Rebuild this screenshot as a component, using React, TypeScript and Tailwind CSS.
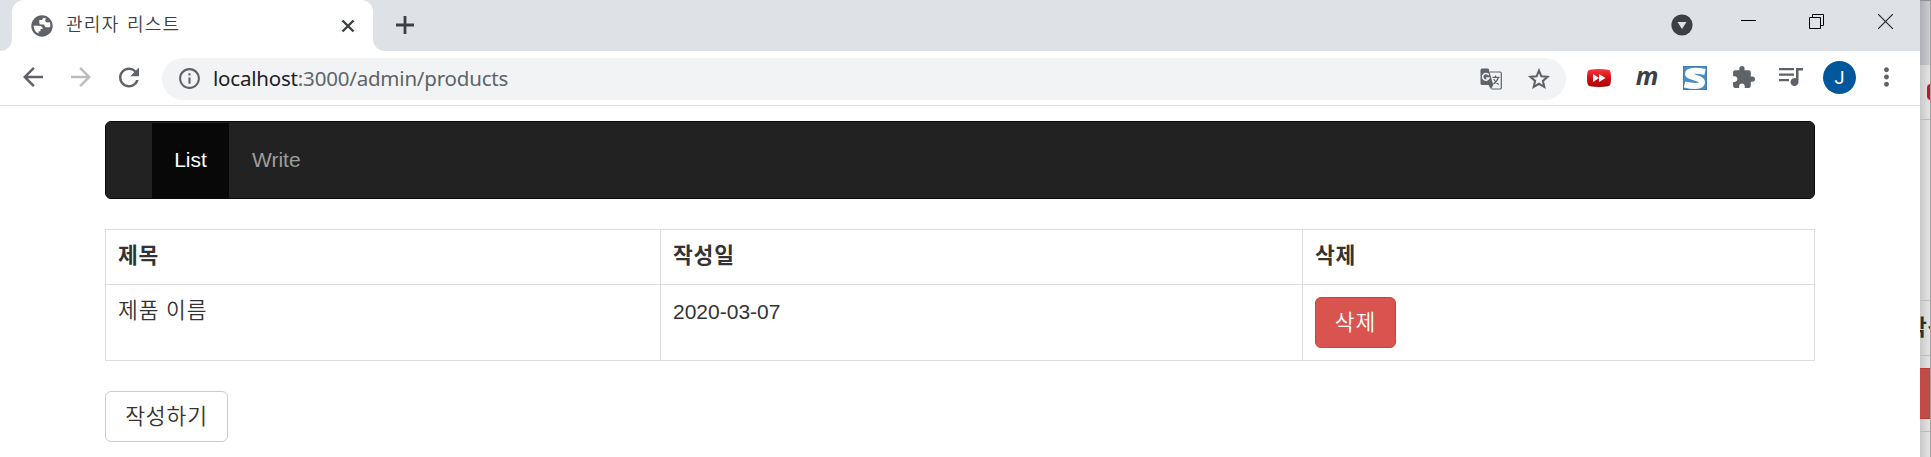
import type { ReactNode } from 'react';
import {
  MdArrowBack,
  MdArrowForward,
  MdRefresh,
  MdInfoOutline,
  MdExtension,
  MdMoreVert,
} from 'react-icons/md';

const hangul = "font-['Noto_Sans_CJK_KR',sans-serif]";
const hangulBody = "font-['Noto_Sans_CJK_KR',sans-serif] text-[21.5px] font-[350] tracking-[0.9px] [word-spacing:1px]";
const hangulBold = "font-['Noto_Sans_CJK_KR',sans-serif] text-[21.5px] font-bold tracking-[0.8px]";

function Slot({ className, children }: { className: string; children: ReactNode }) {
  return <div className={`flex shrink-0 items-center justify-center ${className}`}>{children}</div>;
}

function Globe() {
  return (
    <svg className="size-[22px] shrink-0" viewBox="0 0 22 22">
      <circle cx="11" cy="11" r="10.700" fill="#5f6368" />
      <path
        d="M2.600 10.800h5.600q3.300.2 3.500 3.100h-2.200v2.400H7.600v2.200Q2.800 16.500 2.600 10.800zM13 2.800q-1.800 1-2 2.300H8.300V7.900q.2 1.500 2 1.500h2.900q.2 2.900 3 2.800h2.800q.8-2.500-.1-5l-2.300.2q-2.600-.2-2.500-1.800 0-1.400 1.200-1.500Q14.600 3.100 13 2.800z"
        fill="#fff"
      />
    </svg>
  );
}

function Translate() {
  return (
    <svg className="mr-6 h-[22px] w-[22px] shrink-0" viewBox="0 0 22 22">
      <path d="M10 4h10q1.300 0 1.300 1.300v14.400q0 1.300-1.300 1.300h-8.500" fill="#f1f3f4" stroke="#5f6368" strokeWidth="1.200" />
      <path d="M2 .5h6.500L13.300 17H2Q.5 17 .5 15.500V2Q.5.5 2 .5z" fill="#5f6368" />
      <path d="M8.500 17h4.800l-2.300 4.200z" fill="#5f6368" />
      <path d="M8.700 7A3.300 3.300 0 1 0 9 10H6" fill="none" stroke="#f1f3f4" strokeWidth="1.600" />
      <path d="M12.500 9.300h7M15.500 7.500v1.800M18.300 9.500q-1 4-5 6.500M13.800 11q1.500 3.500 5 5.500" fill="none" stroke="#5f6368" strokeWidth="1.200" />
    </svg>
  );
}

function Star() {
  return (
    <svg className="size-[26px] shrink-0" viewBox="0 0 24 24" fill="none" stroke="#5f6368" strokeWidth="1.900">
      <path d="M12 4.200l2.200 5.300 5.700.5-4.300 3.750 1.300 5.600L12 16.400l-4.900 2.950 1.300-5.600L4.100 10l5.700-.5z" />
    </svg>
  );
}

function TabStrip() {
  return (
    <div className="flex h-[51px] bg-[#dee1e6]">
      <div className="w-3 bg-white">
        <div className="h-full rounded-br-[12px] bg-[#dee1e6]" />
      </div>
      <div className="bg-[#dee1e6]">
        <div className="flex h-[51px] w-[361px] items-center rounded-t-[12px] bg-white pl-[19px] pr-[18px]">
          <Globe />
          <span className={`ml-[13px] mt-[-6px] grow text-[18px] font-[350] leading-[26px] tracking-[1.300px] text-[#3c4043] [word-spacing:2px] ${hangul}`}>
            관리자 리스트
          </span>
          <svg className="size-[14px]" viewBox="0 0 14 14" stroke="#3c4043" strokeWidth="2.4">
            <path d="M1.5 1.5l11 11M12.5 1.5l-11 11" />
          </svg>
        </div>
      </div>
      <div className="w-3 bg-white">
        <div className="h-full rounded-bl-[12px] bg-[#dee1e6]" />
      </div>
      <svg className="ml-[11px] mt-4 size-[18px]" viewBox="0 0 18 18" stroke="#3c4043" strokeWidth="2.8">
        <path d="M9 0v18M0 9h18" />
      </svg>
      <div className="grow" />
      <svg className="mr-12 mt-[14px] size-[22px]" viewBox="0 0 22 22">
        <circle cx="11" cy="11" r="10.6" fill="#3c4043" />
        <path d="M6.5 8h9L11 15z" fill="#dee1e6" />
      </svg>
      <svg className="mr-[53px] mt-[14px] size-[15px]" viewBox="0 0 15 15">
        <path d="M0 6.5h15" stroke="#000" />
      </svg>
      <svg className="mr-[54px] mt-[14px] size-[15px]" viewBox="0 0 15 15" fill="none" stroke="#000">
        <path d="M.5 3.5h11v11H.5zM3.5 3.5v-3h11v11h-3" />
      </svg>
      <svg className="mr-[27px] mt-[14px] size-[15px]" viewBox="0 0 15 15" stroke="#222" strokeWidth="1.1">
        <path d="M0 0l15 15M15 0L0 15" />
      </svg>
    </div>
  );
}

function Toolbar() {
  return (
    <div className="flex h-[55px] items-center border-b border-[#dadce0] bg-white pb-0.5 text-[#5f6368]">
      <Slot className="ml-[18px] w-[30px]">
        <MdArrowBack className="size-[30px]" />
      </Slot>
      <Slot className="ml-[18px] w-[30px] text-[#babcbe]">
        <MdArrowForward className="size-[30px]" />
      </Slot>
      <Slot className="ml-[18px] w-[30px]">
        <MdRefresh className="size-[31px]" />
      </Slot>
      <div className="ml-[18px] mt-[3px] flex h-[42px] w-[1404px] items-center rounded-full bg-[#f1f3f4] pl-[15px] pr-[14px]">
        <MdInfoOutline className="size-[25px]" />
        <span className="ml-[11px] grow font-['Noto_Sans','Open_Sans',sans-serif] text-[20.5px] tracking-[-0.2px] text-[#5f6368]">
          <span className="text-[#202124]">localhost</span>:3000/admin/products
        </span>
        <Translate />
        <Star />
      </div>
      <Slot className="ml-[21px] mt-0.5 w-6">
        <svg className="h-[18px] w-6" viewBox="0 0 24 18">
          <defs>
            <linearGradient id="red" x2="0" y2="1">
              <stop stopColor="#f23c40" />
              <stop offset=".5" stopColor="#d20f14" />
              <stop offset="1" stopColor="#a80005" />
            </linearGradient>
          </defs>
          <path d="M3 .8Q12-.6 21 .8q2.300.4 2.600 2.600.8 5.600 0 11.200Q23.300 16.800 21 17.200q-9 1.400-18 0Q.7 16.800.4 14.600q-.8-5.600 0-11.200Q.7 1.200 3 .8z" fill="url(#red)" />
          <path d="M6 5l6 4-6 4zM12 5l6.500 4-6.500 4z" fill="#fff" />
        </svg>
      </Slot>
      <Slot className="ml-6 w-6">
        <span className="mt-[-4px] font-['Open_Sans',sans-serif] text-[25px] font-bold italic leading-none text-[#3c4043]">m</span>
      </Slot>
      <Slot className="ml-6 mt-0.5 w-6">
        <svg className="size-6" viewBox="0 0 24 24">
          <path d="M0 0h24v24H0z" fill="#3d7db3" />
          <path d="M1 1h22v22H1z" fill="#4a8dc2" />
          <path d="M22 6C16 4.500 5.500 3.500 5 7.500S19.500 11.500 19 16.500 8 20 1.500 18.500" fill="none" stroke="#fff" strokeWidth="6" />
        </svg>
      </Slot>
      <Slot className="ml-6 w-[25px]">
        <MdExtension className="size-[25px]" />
      </Slot>
      <Slot className="ml-[23px] w-6">
        <svg className="h-[20px] w-6" viewBox="0 0 24 20" fill="#5f6368">
          <path d="M0 1h15v2.300H0zM0 6.500h15v2.300H0zM0 12h10v2.300H0z" />
          <path d="M17 1h7v2.500h-4.500V15a4 4 0 1 1-2.500-3.700z" />
        </svg>
      </Slot>
      <Slot className="ml-5 mt-px size-[33px] rounded-full bg-[#01579b]">
        <span className="mt-px font-['Roboto',sans-serif] text-[18px] leading-none text-white">J</span>
      </Slot>
      <Slot className="ml-4 w-[29px]">
        <MdMoreVert className="size-[30px]" />
      </Slot>
    </div>
  );
}

function Page() {
  return (
    <main className="flex grow flex-col bg-white pl-[105px] pt-[15px] text-[21px] leading-[30px] text-[#333]">
      <nav className="flex h-[78px] w-[1710px] shrink-0 rounded-[6px] border border-[#080808] bg-[#222] pl-[46px]">
        <a className="mt-px flex w-[77px] items-center justify-center bg-[#080808] pb-px text-white">List</a>
        <a className="flex items-center pl-[23px] text-[#9d9d9d]">Write</a>
      </nav>
      <table className="mt-[30px] w-[1710px] table-fixed border-collapse text-left">
        <colgroup>
          <col className="w-[555px]" />
          <col className="w-[642px]" />
          <col />
        </colgroup>
        <thead>
          <tr className="h-[55px]">
            {['제목', '작성일', '삭제'].map((label) => (
              <th key={label} className={`border border-[#ddd] px-3 pt-[9px] align-top leading-[30px] ${hangulBold}`}>
                {label}
              </th>
            ))}
          </tr>
        </thead>
        <tbody>
          <tr className="h-[76px]">
            <td className={`border border-[#ddd] px-3 pt-[9px] align-top leading-[30px] ${hangulBody}`}>제품 이름</td>
            <td className="border border-[#ddd] px-3 pt-3 align-top">2020-03-07</td>
            <td className="border border-[#ddd] px-3 pt-3 align-top">
              <button className={`flex h-[51px] w-[81px] items-center justify-center rounded-[6px] border border-[#d43f3a] bg-[#d9534f] pb-1 text-white ${hangulBody}`}>
                삭제
              </button>
            </td>
          </tr>
        </tbody>
      </table>
      <button className={`mt-[30px] flex h-[51px] w-[123px] shrink-0 items-center justify-center rounded-[6px] border border-[#ccc] bg-white pb-1 ${hangulBody}`}>
        작성하기
      </button>
    </main>
  );
}

/* Sliver of the window that sits behind the browser. */
function BackWindow() {
  return (
    <aside className="flex w-[11px] shrink-0 flex-col overflow-hidden border-r border-[#a0a0a0] bg-linear-to-r from-[#c9c9c9] to-[#e4e4e4]">
      <div className="h-[65px] shrink-0 border-t border-[#8f8f8f] bg-linear-to-r from-[#adafb3] to-[#c9cbd0]" />
      <div className="mt-[19px] h-4 w-[11px] shrink-0 pl-[7px]">
        <div className="h-4 w-2 rounded-l-[4px] bg-[#c01c20]" />
      </div>
      <div className="mt-[19px] h-[181px] shrink-0 border-t border-[#bbb]" />
      <div className="flex h-[55px] shrink-0 border-t border-[#bbb] pt-[10px]">
        <span className={`-ml-[13px] whitespace-nowrap leading-[30px] text-[#2e2e2e] ${hangulBold}`}>작성</span>
      </div>
      <div className="h-[76px] shrink-0 border-t border-[#bbb] pt-3">
        <div className="h-[51px] border-y border-[#b93835] bg-[#c24b48]" />
      </div>
      <div className="grow border-t border-[#bbb]" />
    </aside>
  );
}

export default function App() {
  return (
    <div className="flex h-[457px] w-[1931px] overflow-hidden bg-white font-['Liberation_Sans',sans-serif]">
      <div className="flex w-[1920px] shrink-0 flex-col">
        <TabStrip />
        <Toolbar />
        <Page />
      </div>
      <BackWindow />
    </div>
  );
}
